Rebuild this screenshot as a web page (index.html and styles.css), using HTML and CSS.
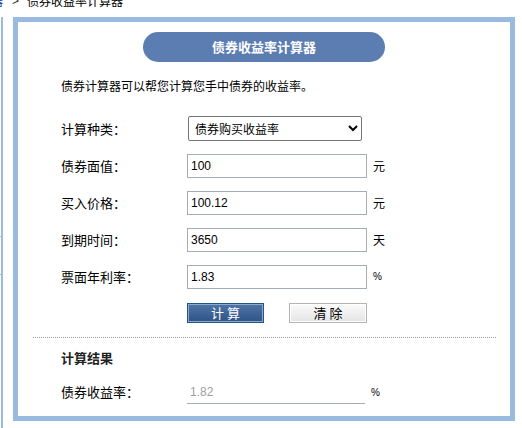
FILE: index.html
```html
<!DOCTYPE html>
<html lang="zh-CN">
<head>
<meta charset="utf-8">
<title>债券收益率计算器</title>
<link rel="stylesheet" href="styles.css">
</head>
<body>
<div class="crumb"><a class="crumb-link" href="#">器</a><span class="crumb-sep">&gt;</span><span>债券收益率计算器</span></div>
<div class="wrap">
  <div class="side"><i class="tick t1"></i><i class="tick t2"></i></div>
  <div class="frame">
    <div class="title">债券收益率计算器</div>
    <p class="desc">债券计算器可以帮您计算您手中债券的收益率。</p>
    <div class="form">
      <div class="row">
        <span class="label">计算种类：</span>
        <select class="sel"><option>债券购买收益率</option></select>
      </div>
      <div class="row">
        <span class="label">债券面值：</span>
        <input class="inp" type="text" value="100">
        <span class="unit">元</span>
      </div>
      <div class="row">
        <span class="label">买入价格：</span>
        <input class="inp" type="text" value="100.12">
        <span class="unit">元</span>
      </div>
      <div class="row">
        <span class="label">到期时间：</span>
        <input class="inp" type="text" value="3650">
        <span class="unit">天</span>
      </div>
      <div class="row">
        <span class="label">票面年利率：</span>
        <input class="inp" type="text" value="1.83">
        <span class="unit pct">%</span>
      </div>
      <div class="btns">
        <button class="btn btn-calc" type="button">计 算</button>
        <button class="btn btn-clear" type="button">清 除</button>
      </div>
    </div>
    <div class="divider"></div>
    <div class="result-title">计算结果</div>
    <div class="row result-row">
      <span class="label">债券收益率：</span>
      <input class="inp res" type="text" value="1.82" readonly>
      <span class="unit pct">%</span>
    </div>
  </div>
</div>
</body>
</html>
```

FILE: styles.css
```css
html, body {
  margin: 0;
  padding: 0;
  background: #ffffff;
  overflow: hidden;
}
body {
  font-family: "Noto Sans CJK SC", "Liberation Sans", sans-serif;
  color: #000;
  width: 522px;
  height: 428px;
}
.crumb {
  height: 12px;
  margin-top: -5px;
  margin-left: -9px;
  font-size: 12px;
  line-height: 12px;
  white-space: nowrap;
  display: flex;
}
.crumb-link {
  color: #1a3f9a;
  text-decoration: none;
}
.crumb-sep {
  font-family: "Liberation Sans", sans-serif;
  margin: 0 8px 0 9px;
  color: #333;
}
.wrap {
  display: flex;
  margin-top: 10px;
  height: 411px;
}
.side {
  position: relative;
  width: 2px;
  margin-left: 1px;
  background: #9bbadf;
}
.tick {
  position: absolute;
  left: -1px;
  width: 1px;
  height: 1px;
  background: #9bbadf;
}
.t1 { top: 219px; }
.t2 { top: 257px; }
.frame {
  margin-left: 10px;
  width: 492px;
  height: 394px;
  border: 5px solid #9bbadf;
  display: flex;
  flex-direction: column;
}
.title {
  align-self: center;
  margin-top: 10px;
  width: 242px;
  height: 30px;
  border-radius: 15px;
  background: #5b7db1;
  color: #fff;
  font-size: 13px;
  font-weight: bold;
  line-height: 30px;
  text-align: center;
}
.desc {
  margin: 16px 0 0 43px;
  font-size: 12px;
  line-height: 16px;
  height: 16px;
}
.form {
  margin-top: 16px;
  padding-left: 43px;
}
.row {
  display: flex;
  align-items: center;
  height: 37px;
}
.label {
  width: 126px;
  font-size: 13px;
  line-height: 16px;
  flex-shrink: 0;
}
.sel {
  margin-left: 1px;
  width: 174px;
  height: 25px;
  border: 1px solid #767676;
  border-radius: 2px;
  background: #fff;
  font-family: "Noto Sans CJK SC", sans-serif;
  font-size: 12px;
  color: #000;
  padding: 0 2px;
  box-sizing: border-box;
}
.inp {
  width: 180px;
  height: 24px;
  box-sizing: border-box;
  border: 1px solid #a5acb2;
  padding: 0 3px;
  font-family: "Liberation Sans", sans-serif;
  font-size: 12px;
  color: #000;
  outline: none;
}
.unit {
  margin-left: 6px;
  font-size: 12px;
}
.pct {
  font-family: "Liberation Sans", sans-serif;
  font-size: 10px;
}
.btns {
  display: flex;
  gap: 25px;
  margin-top: 8px;
  padding-left: 126px;
}
.btn {
  height: 20px;
  padding: 0;
  font-family: "Noto Sans CJK SC", sans-serif;
  font-size: 13px;
  line-height: 16px;
  cursor: pointer;
}
.btn-calc {
  width: 77px;
  color: #fff;
  border: 1px solid #1b5887;
  box-shadow: inset 0 0 0 1px #8eaacb;
  background: linear-gradient(#4f74a6, #2f5386);
}
.btn-clear {
  width: 78px;
  color: #000;
  border: 1px solid #b3b3b3;
  box-shadow: inset 0 0 0 1px #ffffff;
  background: linear-gradient(#fbfbfb, #e4e4e4);
}
.divider {
  margin: 14px 14px 0 15px;
  border-top: 1px dotted #999;
  height: 0;
}
.result-title {
  margin: 12px 0 0 43px;
  font-size: 13px;
  font-weight: bold;
  line-height: 16px;
  color: #222;
}
.result-row {
  margin-top: 11px;
  padding-left: 43px;
  height: 30px;
}
.res {
  width: 178px;
  border: none;
  border-bottom: 1px solid #a5acb2;
  color: #a0a0a0;
  background: transparent;
}
```
